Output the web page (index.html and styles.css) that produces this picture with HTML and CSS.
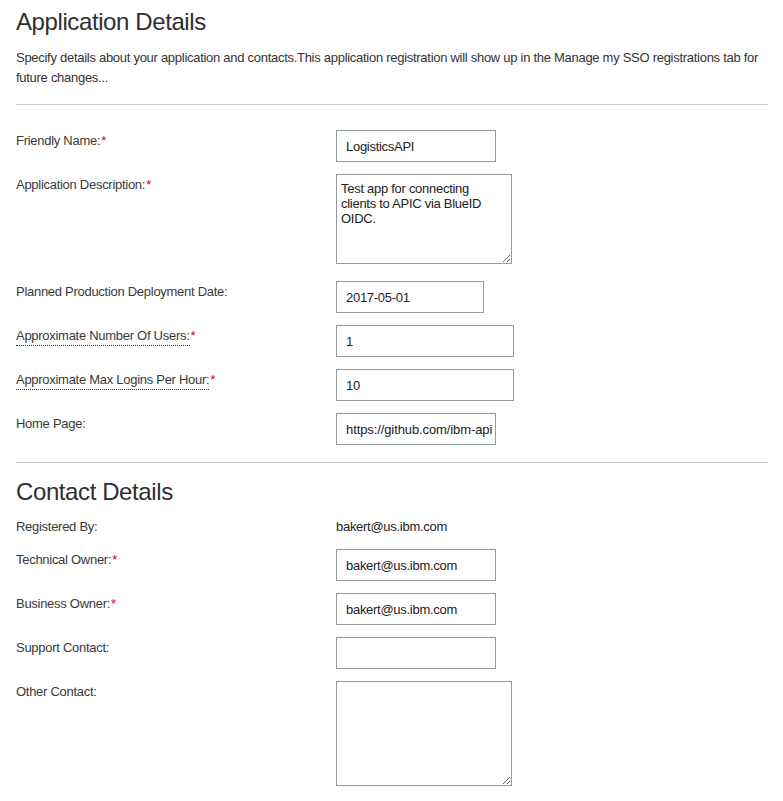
FILE: index.html
```html
<!DOCTYPE html>
<html lang="en">
<head>
<meta charset="utf-8">
<title>Application Details</title>
<link rel="stylesheet" href="styles.css">
</head>
<body>
<div class="page">
  <h1 class="title">Application Details</h1>
  <p class="intro">Specify details about your application and contacts.This application registration will show up in the Manage my SSO registrations tab for future changes...</p>
  <div class="rule rule-top"></div>

  <form class="form">
    <div class="row">
      <label class="lbl">Friendly Name:<span class="req">*</span></label>
      <div class="field"><input class="input w160" type="text" value="LogisticsAPI"></div>
    </div>
    <div class="row">
      <label class="lbl">Application Description:<span class="req">*</span></label>
      <div class="field"><textarea class="area area-desc">Test app for connecting clients to APIC via BlueID OIDC.</textarea></div>
    </div>
    <div class="row">
      <label class="lbl">Planned Production Deployment Date:</label>
      <div class="field"><input class="input w148" type="text" value="2017-05-01"></div>
    </div>
    <div class="row">
      <label class="lbl"><abbr class="hint" title="Approximate number of users">Approximate Number Of Users:</abbr><span class="req">*</span></label>
      <div class="field"><input class="input w178" type="text" value="1"></div>
    </div>
    <div class="row">
      <label class="lbl"><abbr class="hint" title="Approximate max logins per hour">Approximate Max Logins Per Hour:</abbr><span class="req">*</span></label>
      <div class="field"><input class="input w178" type="text" value="10"></div>
    </div>
    <div class="row row-last">
      <label class="lbl">Home Page:</label>
      <div class="field"><input class="input w160 tight" type="text" value="https://github.com/ibm-api"></div>
    </div>
  </form>

  <div class="rule rule-mid"></div>
  <h2 class="title title-2">Contact Details</h2>

  <div class="form">
    <div class="row">
      <span class="lbl">Registered By:</span>
      <div class="field"><span class="value">bakert@us.ibm.com</span></div>
    </div>
    <div class="row">
      <label class="lbl">Technical Owner:<span class="req">*</span></label>
      <div class="field"><input class="input w160" type="text" value="bakert@us.ibm.com"></div>
    </div>
    <div class="row">
      <label class="lbl">Business Owner:<span class="req">*</span></label>
      <div class="field"><input class="input w160" type="text" value="bakert@us.ibm.com"></div>
    </div>
    <div class="row">
      <label class="lbl">Support Contact:</label>
      <div class="field"><input class="input w160" type="text" value=""></div>
    </div>
    <div class="row">
      <label class="lbl">Other Contact:</label>
      <div class="field"><textarea class="area area-other"></textarea></div>
    </div>
  </div>
</div>
</body>
</html>
```

FILE: styles.css
```css
html, body {
  margin: 0;
  padding: 0;
  background: #ffffff;
}

body {
  font-family: "Liberation Sans", Arial, "Helvetica Neue", sans-serif;
  font-size: 13px;
  color: #333333;
  letter-spacing: -0.28px;
}

.page {
  padding: 8px 15px 0 16px;
}

.title {
  margin: 0;
  font-size: 24px;
  font-weight: 400;
  line-height: 27px;
  color: #2f2f2f;
  letter-spacing: -0.4px;
}

.title-2 {
  margin: 15px 0 11px;
}

.intro {
  margin: 13px 0 0;
  line-height: 20px;
  color: #333333;
}

.rule {
  border-top: 1px solid #cccccc;
  height: 0;
}

.rule-top {
  margin: 16px 0 25px;
}

.rule-mid {
  margin: 17px 0 0;
}

.form {
  display: flex;
  flex-direction: column;
}

.row {
  display: grid;
  grid-template-columns: 320px 1fr;
  margin-bottom: 12px;
}

.row-last {
  margin-bottom: 0;
}

.lbl {
  line-height: 20px;
  padding-top: 1px;
  color: #3a3a3a;
}

.hint {
  display: inline-block;
  text-decoration: none;
  border-bottom: 1px dotted #333333;
  line-height: 20px;
  height: 20px;
  box-sizing: border-box;
}

.req {
  color: #d0021b;
  margin-left: 1px;
}

.field {
  display: flex;
  align-items: flex-start;
}

.value {
  line-height: 20px;
  padding-top: 1px;
  color: #222222;
}

.input {
  box-sizing: border-box;
  height: 32px;
  margin: 0;
  padding: 1px 9px 0;
  border: 1px solid #939b9b;
  border-radius: 0;
  background: #ffffff;
  font-family: "Liberation Sans", Arial, "Helvetica Neue", sans-serif;
  font-size: 13px;
  letter-spacing: -0.28px;
  color: #222222;
  outline: none;
}

.tight {
  padding-right: 0;
  letter-spacing: -0.1px;
}

.w160 { width: 160px; }
.w148 { width: 148px; }
.w178 { width: 178px; }

.area {
  display: block;
  box-sizing: border-box;
  width: 176px;
  margin: 0;
  padding: 6px 4px;
  border: 1px solid #939b9b;
  border-radius: 0;
  background: #ffffff;
  font-family: "Liberation Sans", Arial, "Helvetica Neue", sans-serif;
  font-size: 13px;
  letter-spacing: -0.28px;
  line-height: 15px;
  color: #222222;
  outline: none;
  resize: both;
  overflow: hidden;
}

.area-desc {
  height: 90px;
  margin-bottom: 5px;
}

.area-other {
  height: 105px;
}
```
